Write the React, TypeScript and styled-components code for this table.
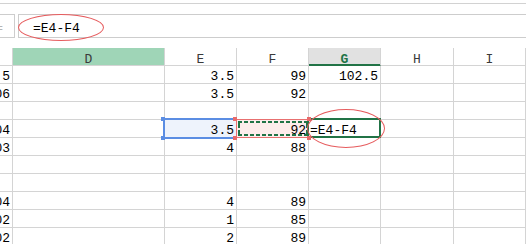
import React from 'react';
import styled, { createGlobalStyle, css } from 'styled-components';

const Global = createGlobalStyle`
  html, body { margin: 0; padding: 0; background: #fff; overflow: hidden; }
  body { font-family: "Liberation Mono", "DejaVu Sans Mono", monospace; font-size: 13px; color: #000; }
`;

const GRID = '13px 152px 72px 72px 72px 73px 72px';
const LINE = '#d4d4d4';
const GREEN = '#217346';

const Page = styled.div`
  position: relative;
  width: 526px;
  height: 244px;
  overflow: hidden;
`;

const Toolbar = styled.div`
  height: 3px;
  border-bottom: 1px solid #d2d2d2;
`;

const FormulaRow = styled.div`
  margin-top: 10px;
  height: 24px;
  display: flex;
  gap: 3px;
`;

const NameBox = styled.div`
  box-sizing: border-box;
  width: 15px;
  height: 24px;
  border: 1px solid #cdcdcd;
  border-left: none;
  display: flex;
  justify-content: flex-end;
  overflow: hidden;
  padding: 7px 11px 0 0;
  line-height: 13px;
  color: #b5b5b5;
  white-space: nowrap;
`;

const FormulaInput = styled.div`
  flex: 1;
  box-sizing: border-box;
  height: 24px;
  border: 1px solid #cdcdcd;
  border-right: none;
  padding: 7px 0 0 14px;
  line-height: 13px;
  white-space: nowrap;
`;

const Sheet = styled.div`
  margin-top: 10px;
`;

const Row = styled.div<{ $header?: boolean }>`
  display: grid;
  grid-template-columns: ${GRID};
  height: 18px;
`;

const HeaderCell = styled.div<{ $tone?: 'plain' | 'column' | 'active' }>`
  box-sizing: border-box;
  height: 18px;
  border-right: 1px solid ${LINE};
  border-bottom: 1px solid ${LINE};
  padding-top: 5px;
  line-height: 13px;
  text-align: center;
  color: #3a3a3a;
  background: #fff;
  ${(p) =>
    p.$tone === 'column' &&
    css`
      background: #9fd5b7;
    `}
  ${(p) =>
    p.$tone === 'active' &&
    css`
      background: #e1e1e1;
      color: ${GREEN};
      font-weight: bold;
      border-bottom: 1px solid ${GREEN};
      box-shadow: inset 0 -1px 0 ${GREEN};
    `}
`;

const Cell = styled.div<{ $align?: 'left' | 'right'; $state?: 'ref' | 'copy' | 'active'; $clip?: boolean }>`
  position: relative;
  box-sizing: border-box;
  height: 18px;
  border-right: 1px solid ${LINE};
  border-bottom: 1px solid ${LINE};
  padding: 4px 2px 0 1px;
  line-height: 13px;
  display: flex;
  justify-content: ${(p) => (p.$align === 'left' ? 'flex-start' : 'flex-end')};
  white-space: nowrap;
  overflow: ${(p) => (p.$clip ? 'hidden' : 'visible')};
  ${(p) =>
    p.$state === 'ref' &&
    css`
      background: #eef3fc;
    `}
  ${(p) =>
    p.$state === 'copy' &&
    css`
      background: #fdeceb;
    `}
`;

const RefFrame = styled.span`
  position: absolute;
  z-index: 2;
  left: -2px;
  top: -2px;
  right: 0;
  bottom: -2px;
  border: 2px solid #5b8de3;
  border-right: none;
  pointer-events: none;
`;

const CopyFrame = styled.span`
  position: absolute;
  z-index: 2;
  left: -1px;
  top: -1px;
  right: -1px;
  bottom: -1px;
  border: 1px solid #e87070;
  pointer-events: none;
  &::before,
  &::after {
    content: '';
    position: absolute;
    left: 1px;
    right: 1px;
    height: 2px;
    background: repeating-linear-gradient(90deg, ${GREEN} 0 4px, transparent 4px 6px);
  }
  &::before { top: 1px; }
  &::after { bottom: 1px; }
`;

const CopySide = styled.span<{ $side: 'left' | 'right' }>`
  position: absolute;
  z-index: 2;
  top: 3px;
  bottom: 3px;
  width: 2px;
  ${(p) => (p.$side === 'left' ? 'left: 1px;' : 'right: 0px;')}
  background: repeating-linear-gradient(180deg, ${GREEN} 0 5px, transparent 5px 7px);
`;

const ActiveFrame = styled.span`
  position: absolute;
  z-index: 3;
  left: -2px;
  top: -2px;
  right: -1px;
  bottom: -1px;
  border: 2px solid ${GREEN};
  pointer-events: none;
`;

const Handle = styled.span<{ $color: 'blue' | 'red'; $x: 'left' | 'right'; $y: 'top' | 'bottom' }>`
  position: absolute;
  z-index: 4;
  width: 4px;
  height: 4px;
  background: ${(p) => (p.$color === 'blue' ? '#5b8de3' : '#e86a6a')};
  ${(p) => (p.$x === 'left' ? 'left: -4px;' : 'right: -3px;')}
  ${(p) => (p.$y === 'top' ? 'top: -3px;' : 'bottom: -3px;')}
`;

const Ring = styled.div<{ $left: number; $top: number; $w: number; $h: number }>`
  position: absolute;
  z-index: 5;
  left: ${(p) => p.$left}px;
  top: ${(p) => p.$top}px;
  width: ${(p) => p.$w}px;
  height: ${(p) => p.$h}px;
  box-sizing: border-box;
  border: 1px solid #e65c5e;
  border-radius: 50%;
  pointer-events: none;
`;

type RowData = { c?: string; e?: string; f?: string; g?: string };

const rows: RowData[] = [
  { c: '1.5', e: '3.5', f: '99', g: '102.5' },
  { c: '2006', e: '3.5', f: '92' },
  {},
  { c: '2004', e: '3.5', f: '92', g: '=E4-F4' },
  { c: '2003', e: '4', f: '88' },
  {},
  {},
  { c: '2004', e: '4', f: '89' },
  { c: '2002', e: '1', f: '85' },
  { c: '2002', e: '2', f: '89' },
];

export default function App() {
  return (
    <Page>
      <Global />
      <Toolbar />
      <FormulaRow>
        <NameBox>=</NameBox>
        <FormulaInput>=E4-F4</FormulaInput>
      </FormulaRow>
      <Sheet>
        <Row $header>
          <HeaderCell />
          <HeaderCell $tone="column">D</HeaderCell>
          <HeaderCell>E</HeaderCell>
          <HeaderCell>F</HeaderCell>
          <HeaderCell $tone="active">G</HeaderCell>
          <HeaderCell>H</HeaderCell>
          <HeaderCell>I</HeaderCell>
        </Row>
        {rows.map((r, i) => {
          const sel = i === 3;
          return (
            <Row key={i}>
              <Cell $clip>{r.c}</Cell>
              <Cell />
              <Cell $state={sel ? 'ref' : undefined}>
                {r.e}
                {sel && (
                  <>
                    <RefFrame />
                    <Handle $color="blue" $x="left" $y="top" />
                    <Handle $color="blue" $x="left" $y="bottom" />
                  </>
                )}
              </Cell>
              <Cell $state={sel ? 'copy' : undefined}>
                {r.f}
                {sel && (
                  <>
                    <CopyFrame />
                    <CopySide $side="left" />
                    <CopySide $side="right" />
                    <Handle $color="red" $x="left" $y="top" />
                    <Handle $color="red" $x="left" $y="bottom" />
                    <Handle $color="red" $x="right" $y="top" />
                    <Handle $color="red" $x="right" $y="bottom" />
                  </>
                )}
              </Cell>
              <Cell $align={sel ? 'left' : 'right'} $state={sel ? 'active' : undefined}>
                {r.g}
                {sel && <ActiveFrame />}
              </Cell>
              <Cell />
              <Cell />
            </Row>
          );
        })}
      </Sheet>
      <Ring $left={18} $top={14} $w={86} $h={27} />
      <Ring $left={307} $top={109} $w={78} $h={39} />
    </Page>
  );
}
